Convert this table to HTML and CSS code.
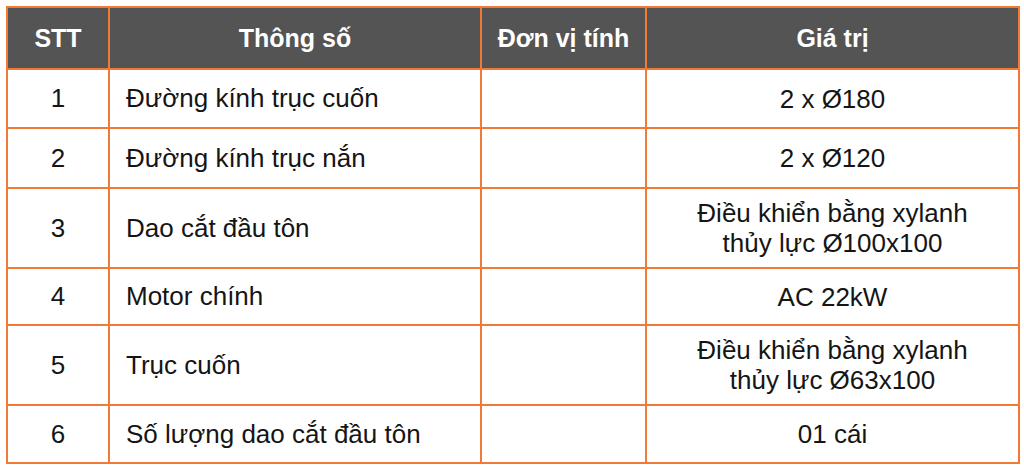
FILE: index.html
```html
<!DOCTYPE html>
<html lang="vi">
<head>
<meta charset="utf-8">
<link rel="stylesheet" href="styles.css">
</head>
<body>
<table class="spec">
  <colgroup>
    <col class="c1"><col class="c2"><col class="c3"><col class="c4">
  </colgroup>
  <thead>
    <tr class="head">
      <th>STT</th><th>Thông số</th><th>Đơn vị tính</th><th>Giá trị</th>
    </tr>
  </thead>
  <tbody>
    <tr class="r1"><td class="num">1</td><td class="name">Đường kính trục cuốn</td><td></td><td class="val">2 x Ø180</td></tr>
    <tr class="r2"><td class="num">2</td><td class="name">Đường kính trục nắn</td><td></td><td class="val">2 x Ø120</td></tr>
    <tr class="r3"><td class="num">3</td><td class="name">Dao cắt đầu tôn</td><td></td><td class="val">Điều khiển bằng xylanh<br>thủy lực Ø100x100</td></tr>
    <tr class="r4"><td class="num">4</td><td class="name">Motor chính</td><td></td><td class="val">AC 22kW</td></tr>
    <tr class="r5"><td class="num">5</td><td class="name">Trục cuốn</td><td></td><td class="val">Điều khiển bằng xylanh<br>thủy lực Ø63x100</td></tr>
    <tr class="r6"><td class="num">6</td><td class="name">Số lượng dao cắt đầu tôn</td><td></td><td class="val">01 cái</td></tr>
  </tbody>
</table>
</body>
</html>
```
FILE: styles.css
```css
html, body {
  margin: 0;
  padding: 0;
  background: #ffffff;
}
body {
  padding: 6px 0 0 6px;
  font-family: "Liberation Sans", Arial, sans-serif;
}
.spec {
  border-collapse: collapse;
  table-layout: fixed;
  width: 1012px;
  font-size: 26px;
  color: #151515;
}
.c1 { width: 102px; }
.c2 { width: 372px; }
.c3 { width: 165px; }
.c4 { width: 373px; }
.spec th, .spec td {
  border: 2px solid #ef7b35;
  padding: 0;
  vertical-align: middle;
}
.head th {
  background: #545454;
  color: #ffffff;
  font-weight: bold;
  font-size: 25px;
  height: 60px;
  text-align: center;
}
.num { text-align: center; }
.name { text-align: left; padding-left: 16px !important; }
.val { text-align: center; line-height: 30px; }
.r1 td { height: 57px; }
.r2 td { height: 58px; }
.r3 td { height: 78px; }
.r4 td { height: 55px; }
.r5 td { height: 78px; }
.r6 td { height: 56px; }
```
